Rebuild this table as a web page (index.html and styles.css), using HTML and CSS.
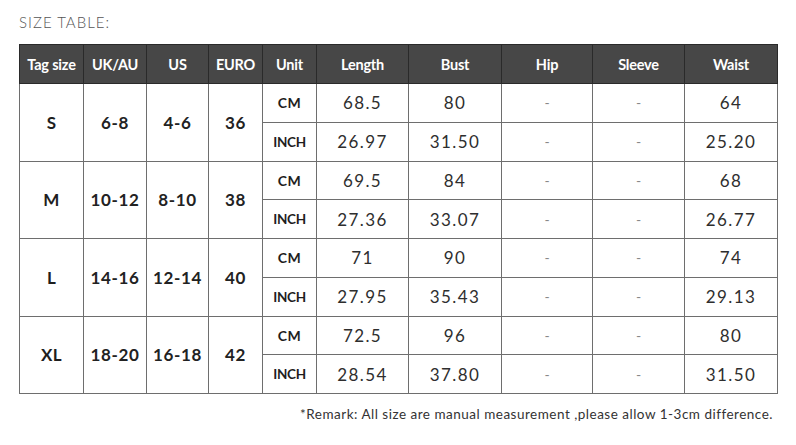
FILE: index.html
```html
<!DOCTYPE html>
<html>
<head>
<meta charset="utf-8">
<link rel="stylesheet" href="styles.css">
</head>
<body>
<div class="page">
  <h1 class="title">SIZE TABLE:</h1>
  <table class="sizes">
    <colgroup>
      <col class="c64"><col class="c63"><col class="c62"><col class="c54"><col class="c54">
      <col class="c92"><col class="c93"><col class="c91"><col class="c92"><col class="c93">
    </colgroup>
    <thead>
      <tr><th>Tag size</th><th>UK/AU</th><th>US</th><th>EURO</th><th>Unit</th><th>Length</th><th>Bust</th><th>Hip</th><th>Sleeve</th><th>Waist</th></tr>
    </thead>
    <tbody>
      <tr><td rowspan="2" class="tag">S</td><td rowspan="2" class="sz">6-8</td><td rowspan="2" class="sz">4-6</td><td rowspan="2" class="sz">36</td><td class="unit">CM</td><td>68.5</td><td>80</td><td class="dash">-</td><td class="dash">-</td><td>64</td></tr>
      <tr><td class="unit inch">INCH</td><td>26.97</td><td>31.50</td><td class="dash">-</td><td class="dash">-</td><td>25.20</td></tr>
      <tr><td rowspan="2" class="tag">M</td><td rowspan="2" class="sz">10-12</td><td rowspan="2" class="sz">8-10</td><td rowspan="2" class="sz">38</td><td class="unit">CM</td><td>69.5</td><td>84</td><td class="dash">-</td><td class="dash">-</td><td>68</td></tr>
      <tr><td class="unit inch">INCH</td><td>27.36</td><td>33.07</td><td class="dash">-</td><td class="dash">-</td><td>26.77</td></tr>
      <tr><td rowspan="2" class="tag">L</td><td rowspan="2" class="sz">14-16</td><td rowspan="2" class="sz">12-14</td><td rowspan="2" class="sz">40</td><td class="unit">CM</td><td>71</td><td>90</td><td class="dash">-</td><td class="dash">-</td><td>74</td></tr>
      <tr><td class="unit inch">INCH</td><td>27.95</td><td>35.43</td><td class="dash">-</td><td class="dash">-</td><td>29.13</td></tr>
      <tr><td rowspan="2" class="tag">XL</td><td rowspan="2" class="sz">18-20</td><td rowspan="2" class="sz">16-18</td><td rowspan="2" class="sz">42</td><td class="unit">CM</td><td>72.5</td><td>96</td><td class="dash">-</td><td class="dash">-</td><td>80</td></tr>
      <tr><td class="unit inch">INCH</td><td>28.54</td><td>37.80</td><td class="dash">-</td><td class="dash">-</td><td>31.50</td></tr>
    </tbody>
  </table>
  <p class="remark">*Remark: All size are manual measurement ,please allow 1-3cm difference.</p>
</div>
</body>
</html>
```
FILE: styles.css
```css
html, body {
  margin: 0;
  padding: 0;
  background: #fff;
}
.page {
  width: 796px;
  height: 445px;
  padding: 13px 0 0 19px;
  box-sizing: border-box;
  font-family: Lato, "Open Sans", sans-serif;
}
.title {
  margin: 0;
  height: 31px;
  font-size: 15px;
  font-weight: 300;
  color: #555;
  line-height: 18px;
  letter-spacing: 1px;
}
.sizes {
  border-collapse: collapse;
  table-layout: fixed;
  width: 758px;
}
.c64 { width: 64px; }
.c63 { width: 63px; }
.c62 { width: 62px; }
.c54 { width: 54px; }
.c92 { width: 92px; }
.c93 { width: 93px; }
.c91 { width: 91px; }
.sizes th {
  background: #474747;
  color: #fff;
  font-size: 14.5px;
  font-weight: 700;
  height: 39px;
  padding: 0;
  border: 1px solid #2a2a2a;
  letter-spacing: -0.2px;
  box-sizing: border-box;
}
.sizes td {
  height: 38.75px;
  padding: 0;
  border: 1px solid #6e6e6e;
  text-align: center;
  font-size: 17px;
  font-weight: 400;
  color: #2e2e2e;
  letter-spacing: 1.4px;
  box-sizing: border-box;
}
.sizes td.tag {
  font-weight: 700;
  font-size: 17px;
  color: #1e1e1e;
  letter-spacing: 0.3px;
}
.sizes td.sz {
  font-weight: 700;
  font-size: 17px;
  color: #222;
  letter-spacing: 0.6px;
}
.sizes td.unit {
  font-size: 14px;
  font-weight: 700;
  color: #1e1e1e;
  letter-spacing: 0.4px;
}
.sizes td.inch {
  font-size: 13.5px;
  letter-spacing: -0.3px;
}
.sizes td.dash {
  color: #888;
  font-size: 14px;
  letter-spacing: 0;
}
.remark {
  margin: 12px 0 0;
  width: 754px;
  text-align: right;
  font-size: 13.5px;
  color: #333;
  letter-spacing: 0.5px;
}
```
